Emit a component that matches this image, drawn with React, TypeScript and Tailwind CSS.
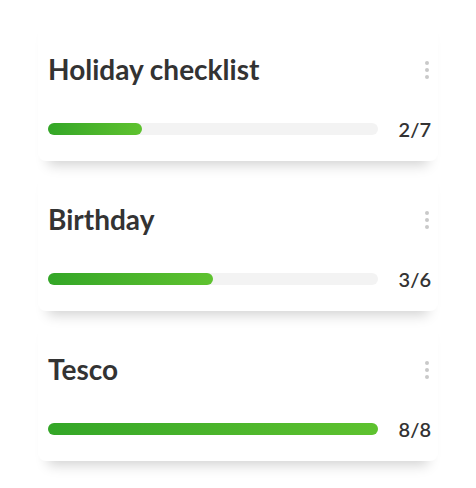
const lists = [
  { name: "Holiday checklist", done: 2, total: 7 },
  { name: "Birthday", done: 3, total: 6 },
  { name: "Tesco", done: 8, total: 8 },
];

const zs = ["z-30", "z-20", "z-10"];

function ListCard({ name, done, total, z }: { name: string; done: number; total: number; z: string }) {
  const pct = (done / total) * 100;
  return (
    <div
      className={`relative ${z} h-[150px] rounded-lg bg-white pl-[10px] pr-[7px] pt-[43px] shadow-[0_14px_12px_-10px_rgba(0,0,0,0.18)]`}
    >
      <div className="flex items-center justify-between">
        <h2 className="text-[28px] font-bold leading-[30px] text-[#333]">{name}</h2>
        <div className="flex flex-col gap-[3px] pr-[2px] pt-[2px]">
          <span className="h-[4px] w-[4px] rounded-full bg-[#c9c9c9]" />
          <span className="h-[4px] w-[4px] rounded-full bg-[#c9c9c9]" />
          <span className="h-[4px] w-[4px] rounded-full bg-[#c9c9c9]" />
        </div>
      </div>
      <div className="mt-[34px] flex items-center">
        <div className="h-[12px] w-[330px] rounded-full bg-[#f3f3f3]">
          <div
            className="h-full rounded-full bg-gradient-to-r from-[#33a627] to-[#5ec22f]"
            style={{ width: `${pct}%` }}
          />
        </div>
        <span className="ml-auto text-[20px] font-semibold leading-[22px] text-[#333]">
          {done}/{total}
        </span>
      </div>
    </div>
  );
}

export default function App() {
  return (
    <div
      className="min-h-[488px] w-[476px] bg-white px-[38px] pt-[11px]"
      style={{ fontFamily: "Lato, 'Open Sans', sans-serif" }}
    >
      <div className="flex flex-col">
        {lists.map((l, i) => (
          <ListCard key={l.name} {...l} z={zs[i]} />
        ))}
      </div>
    </div>
  );
}
